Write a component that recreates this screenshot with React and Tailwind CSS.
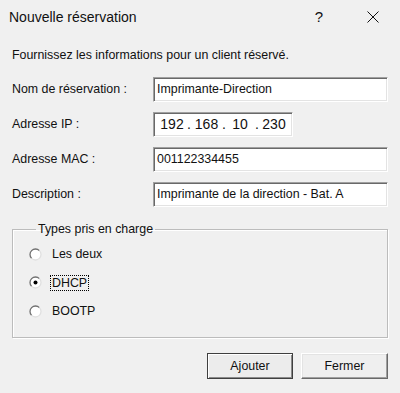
import React from 'react';

const fields = [
  { label: 'Nom de réservation :', value: 'Imprimante-Direction' },
  { label: 'Adresse IP :', ip: ['192', '168', '10', '230'] },
  { label: 'Adresse MAC :', value: '001122334455' },
  { label: 'Description :', value: 'Imprimante de la direction - Bat. A' },
];

const types = [
  { id: 'both', label: 'Les deux' },
  { id: 'dhcp', label: 'DHCP' },
  { id: 'bootp', label: 'BOOTP' },
];

const sunken =
  'border border-[#a0a0a0] border-r-white border-b-white bg-white shadow-[inset_1px_1px_0_#696969,inset_-1px_-1px_0_#e3e3e3]';

const Radio = ({ checked }) => (
  <svg width="13" height="13" viewBox="0 0 13 13" className="shrink-0">
    <circle cx="6.5" cy="6.5" r="5.5" fill="#fff" />
    <path d="M2.61 10.39 A5.5 5.5 0 0 1 10.39 2.61" fill="none" stroke="#707070" strokeWidth="1.3" />
    <path d="M10.39 2.61 A5.5 5.5 0 0 1 2.61 10.39" fill="none" stroke="#e0e0e0" strokeWidth="1.3" />
    {checked && <circle cx="6.5" cy="6.5" r="2" fill="#000" />}
  </svg>
);

const IpField = ({ parts }) => (
  <div className={`${sunken} h-[25px] w-[140px] flex items-center pl-[3px] text-[14px]`}>
    <span className="w-[30px] text-center">{parts[0]}</span>
    <span className="w-[4px] text-center">.</span>
    <span className="w-[31px] text-center">{parts[1]}</span>
    <span className="w-[4px] text-center">.</span>
    <span className="w-[28px] text-center">{parts[2]}</span>
    <span className="w-[6px] text-center">.</span>
    <span className="w-[28px] text-center">{parts[3]}</span>
  </div>
);

export default function App() {
  return (
    <div
      className="w-[400px] h-[393px] bg-[#f0f0f0] text-[#111] text-[12.4px] flex flex-col overflow-hidden"
      style={{ fontFamily: '"Liberation Sans", Arial, sans-serif' }}
    >
      {/* title bar */}
      <div className="h-[34px] flex items-center pl-[9px] shrink-0">
        <span className="text-[14px] flex-1">Nouvelle réservation</span>
        <span className="text-[15px] w-[12px] text-center mr-[42px]">?</span>
        <svg width="12" height="12" viewBox="0 0 12 12" className="mr-[21px]">
          <path d="M0.5 0.5 L11.5 11.5 M11.5 0.5 L0.5 11.5" stroke="#111" strokeWidth="1" />
        </svg>
      </div>

      <div className="px-[12px] flex flex-col">
        <p className="mt-[13px] leading-[16px]">Fournissez les informations pour un client réservé.</p>

        <div className="mt-[14px] flex flex-col gap-[10px]">
          {fields.map(f => (
            <div key={f.label} className="flex items-center h-[25px]">
              <span className="w-[141px] shrink-0">{f.label}</span>
              {f.ip ? (
                <IpField parts={f.ip} />
              ) : (
                <div className={`${sunken} h-[25px] flex-1 flex items-center pl-[3px]`}>{f.value}</div>
              )}
            </div>
          ))}
        </div>

        <fieldset className="mt-[14px] h-[117px] border border-[#bcbcbc] shadow-[inset_1px_1px_0_#fff,1px_1px_0_#fff] pl-[16px] pt-[3px]">
          <legend className="ml-[7px] px-[2px] leading-[16px]">Types pris en charge</legend>
          <div className="flex flex-col">
            {types.map(t => (
              <div key={t.id} className="h-[28.5px] flex items-center gap-[10px]">
                <Radio checked={t.id === 'dhcp'} />
                <span
                  className={
                    t.id === 'dhcp'
                      ? 'border border-dotted border-black px-[1px] leading-[14px] -ml-[2px]'
                      : ''
                  }
                >
                  {t.label}
                </span>
              </div>
            ))}
          </div>
        </fieldset>

        <div className="mt-[15px] flex justify-end gap-[8px]">
          <button className="w-[86px] h-[26px] bg-[#ececec] border border-[#3f3f3f] shadow-[inset_1px_1px_0_#fff,inset_-1px_-1px_0_#8a8a8a]">
            Ajouter
          </button>
          <button className="w-[87px] h-[26px] bg-[#efefef] border border-t-white border-l-white border-r-[#696969] border-b-[#696969] shadow-[inset_-1px_-1px_0_#a0a0a0,inset_1px_1px_0_#e3e3e3]">
            Fermer
          </button>
        </div>
      </div>
    </div>
  );
}
